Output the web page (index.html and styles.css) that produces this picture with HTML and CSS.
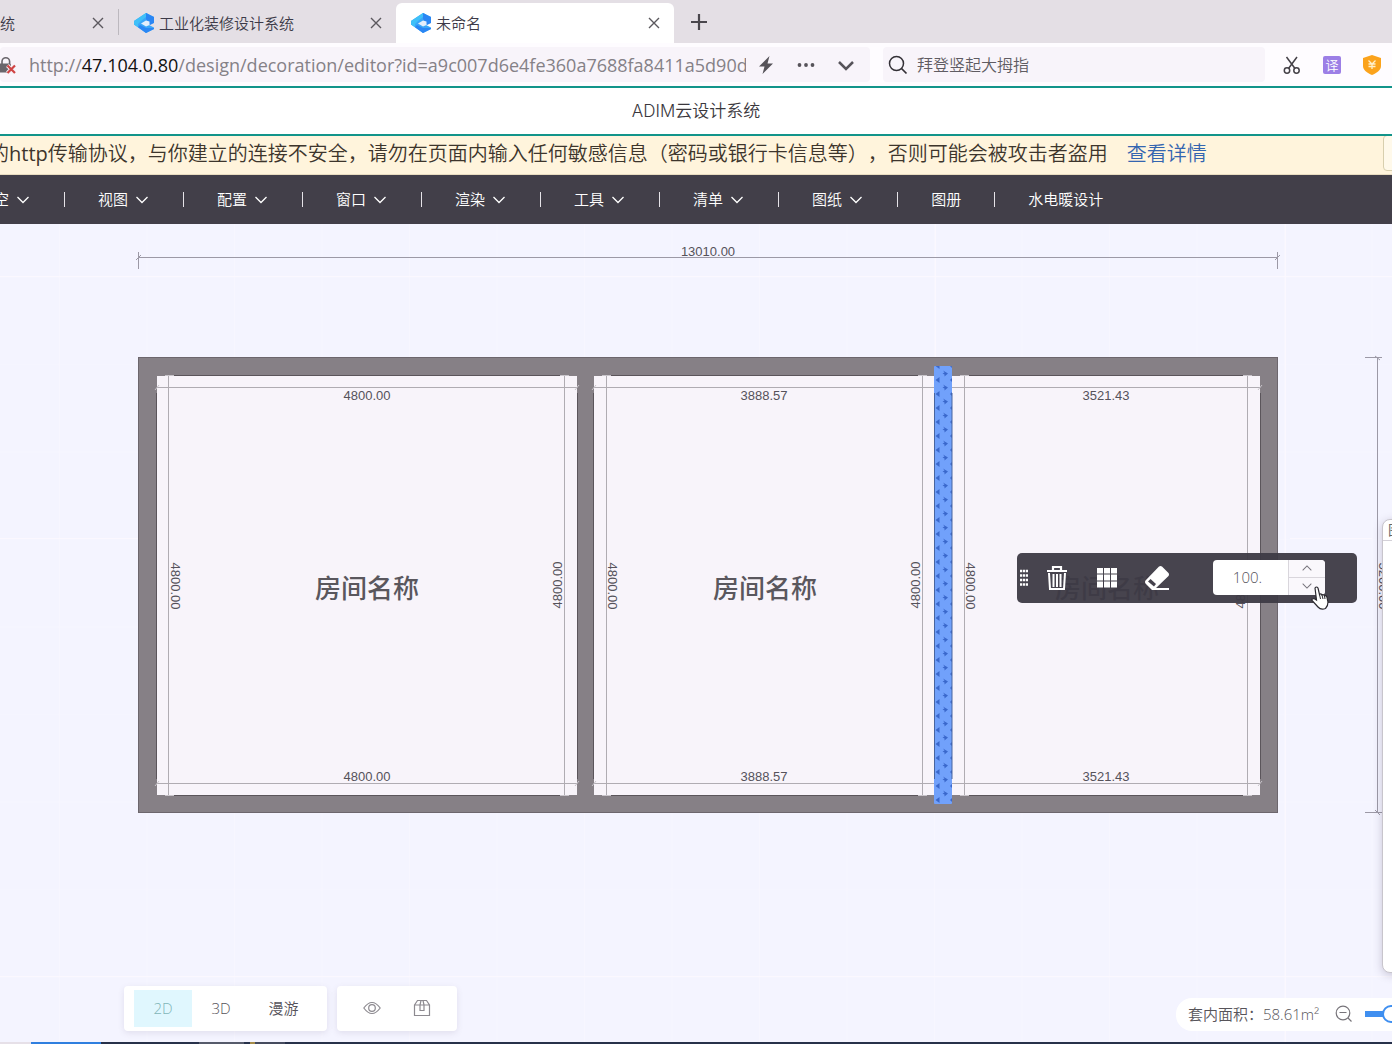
FILE: index.html
```html
<!DOCTYPE html>
<html lang="zh-CN">
<head>
<meta charset="utf-8">
<meta name="viewport" content="width=device-width, initial-scale=1">
<title>ADIM云设计系统</title>
<link rel="stylesheet" href="styles.css">
</head>
<body>
<svg class="defs" aria-hidden="true">
  <symbol id="logo" viewBox="0 0 20 20">
    <path d="M12 0 L20 4 V9.500 L15 12 L20 14.500 V16 L12 20 L0 11.500 V8 Z" fill="#3aa6f8"/>
    <path d="M12 0 L15 1.500 L7 8 L4 11 V14.300 L0 11.500 V8 Z" fill="#3fc0f8"/>
    <path d="M12 0 L20 4 V10 L16 12 L12 6 Z" fill="#2a86f4"/>
    <path d="M6 12 L12 15 L20 15 V16 L12 20 L4 14.300 Z" fill="#2a86f4"/>
    <path d="M7 10.500 L12 7.500 L15.500 8.500 V12 L12 13.500 Z" fill="#e4eefb"/>
  </symbol>
  <symbol id="close" viewBox="0 0 12 12"><path d="M1 1 L11 11 M11 1 L1 11" fill="none" stroke="#5b585e" stroke-width="1.400"/></symbol>
  <symbol id="chevron" viewBox="0 0 12 8"><path d="M.5 1 L6 6.500 L11.500 1" fill="none" stroke="currentColor" stroke-width="1.300"/></symbol>
</svg>

<div class="tabs">
  <div class="tab">
    <svg class="tab-logo"><use href="#logo"/></svg><span class="tab-name">工业化装修设计系统</span>
    <button class="tab-close" aria-label="关闭"><svg><use href="#close"/></svg></button>
  </div>
  <div class="tab tab-divided">
    <svg class="tab-logo"><use href="#logo"/></svg><span class="tab-name">工业化装修设计系统</span>
    <button class="tab-close" aria-label="关闭"><svg><use href="#close"/></svg></button>
  </div>
  <div class="tab tab-active">
    <svg class="tab-logo"><use href="#logo"/></svg><span class="tab-name">未命名</span>
    <button class="tab-close" aria-label="关闭"><svg><use href="#close"/></svg></button>
  </div>
  <button class="tab-new" aria-label="新建标签页"><svg viewBox="0 0 16 16"><path d="M8 0 V16 M0 8 H16" stroke="#4a474d" stroke-width="2.200"/></svg></button>
</div>

<div class="bar">
  <div class="address">
    <svg class="lock" viewBox="0 0 20 20">
      <path d="M6 9 V6.500 a3.800 3.800 0 0 1 7.600 0 V9" fill="none" stroke="#69656b" stroke-width="1.600"/>
      <rect x="1" y="8.500" width="14" height="9" rx="1.500" fill="#69656b"/>
      <path d="M11.500 10.500 L19 18 M19 10.500 L11.500 18" stroke="#f7f2f8" stroke-width="4"/>
      <path d="M11.500 10.500 L19 18 M19 10.500 L11.500 18" stroke="#cf4444" stroke-width="2.200"/>
    </svg>
    <div class="url" role="textbox" aria-label="地址" contenteditable="true" spellcheck="false">http://<span class="host">47.104.0.80</span>/design/decoration/editor?id=a9c007d6e4fe360a7688fa8411a5d90d</div>
    <button class="bar-btn" aria-label="极速模式"><svg viewBox="0 0 18 20"><path d="M12.500 1 L2 11.500 H7.500 L5.500 19 L16 8.500 H10.500 Z" fill="#565359"/></svg></button>
    <button class="bar-btn" aria-label="更多"><svg viewBox="0 0 18 20"><circle cx="2.500" cy="10" r="1.900" fill="#565359"/><circle cx="9" cy="10" r="1.900" fill="#565359"/><circle cx="15.500" cy="10" r="1.900" fill="#565359"/></svg></button>
    <button class="bar-btn" aria-label="展开"><svg viewBox="0 0 18 20"><path d="M2 7 L9 14 L16 7" fill="none" stroke="#565359" stroke-width="2.500"/></svg></button>
  </div>
  <label class="search">
    <svg viewBox="0 0 20 20"><circle cx="8.500" cy="8.500" r="7" fill="none" stroke="#333036" stroke-width="1.500"/><path d="M13.500 13.500 L18.500 18.500" stroke="#333036" stroke-width="1.700"/></svg>
    <input type="text" placeholder="拜登竖起大拇指" aria-label="搜索">
  </label>
  <div class="tools">
    <button class="tool" aria-label="截图"><svg viewBox="0 0 20 20"><path d="M4.500 2 L13 13.500 M15 2 L6.500 13.500" stroke="#444147" stroke-width="1.500"/><circle cx="5" cy="15.500" r="2.700" fill="none" stroke="#444147" stroke-width="1.500"/><circle cx="14.500" cy="15.500" r="2.700" fill="none" stroke="#444147" stroke-width="1.500"/></svg></button>
    <button class="tool translate">译</button>
    <button class="tool" aria-label="优惠"><svg viewBox="0 0 20 20"><path d="M10 0 L19 3 V11 C19 15 15 18 10 20 C5 18 1 15 1 11 V3 Z" fill="#fba31c"/><path d="M6.500 5.500 L10 9 L13.500 5.500 M10 9 V14 M6.500 9 H13.500 M6.500 11.500 H13.500" fill="none" stroke="#fff0cc" stroke-width="1.300"/></svg></button>
  </div>
</div>

<header class="title">ADIM云设计系统</header>

<div class="warning">
  <p>的<span class="latin">http</span>传输协议，与你建立的连接不安全，请勿在页面内输入任何敏感信息（密码或银行卡信息等），否则可能会被攻击者盗用</p>
  <a href="#detail">查看详情</a>
  <button class="warning-btn" aria-label="关闭提示"></button>
</div>

<nav class="menu">
  <button>空<svg><use href="#chevron"/></svg></button>
  <button>视图<svg><use href="#chevron"/></svg></button>
  <button>配置<svg><use href="#chevron"/></svg></button>
  <button>窗口<svg><use href="#chevron"/></svg></button>
  <button>渲染<svg><use href="#chevron"/></svg></button>
  <button>工具<svg><use href="#chevron"/></svg></button>
  <button>清单<svg><use href="#chevron"/></svg></button>
  <button>图纸<svg><use href="#chevron"/></svg></button>
  <button>图册</button>
  <button>水电暖设计</button>
</nav>

<main class="canvas">
  <svg class="drawing" role="img" aria-label="户型平面图">
    <defs>
      <pattern id="hatch" x="796" y="8" width="18" height="14" patternUnits="userSpaceOnUse">
        <rect width="18" height="14" fill="#71a1fb"/>
        <path d="M9 4.500 L14 7.500 L10.500 10.500 V8.500 L8.500 7.500 L10.500 6.500 Z M1.500 14 L5.500 11 V14 Z M1.500 0 H5.500 V3 Z M16 14 L18 12 V14 Z M16 0 H18 V2 Z" fill="#3a68cc"/>
      </pattern>
      <pattern id="grid" x="60" y="52" width="87.500" height="87.500" patternUnits="userSpaceOnUse">
        <path d="M87 0 V87.500 M0 1 H87.500" stroke="#fbf9ff" stroke-opacity=".35" fill="none"/>
      </pattern>
    </defs>
    <rect width="100%" height="100%" fill="url(#grid)"/>
    <path class="major" d="M1285.500 0 V818 M935.500 0 V134 M0 314.500 H138 M1290 314.500 H1372 M0 752.500 H1392 M0 52.500 H1392"/>
    <g transform="translate(138 134)">
      <rect class="wall" x=".5" y="-.5" width="1139" height="455"/>
      <rect class="floor" x="19" y="18" width="420" height="419"/>
      <rect class="floor" x="456" y="18" width="341" height="419"/>
      <rect class="floor" x="814" y="18" width="308" height="419"/>
      <path class="edge" d="M35 17.500 H423 M35 437.500 H423 M18.500 35 V421 M439.500 35 V421
        M472 17.500 H781 M472 437.500 H781 M455.500 35 V421
        M830 17.500 H1107 M830 437.500 H1107 M1122.500 35 V421"/>
      <path class="dim" d="M19 29.500 H439 M19 425.500 H439 M30.500 18 V437 M426.500 18 V437
        M456 29.500 H797 M456 425.500 H797 M468.500 18 V437 M784.500 18 V437
        M814 29.500 H1122 M814 425.500 H1122 M826.500 18 V437 M1109.500 18 V437"/>
      <path class="tick" d="M27 17.500 H36 M422 17.500 H431 M27 437.500 H36 M422 437.500 H431
        M464 17.500 H473 M780 17.500 H789 M464 437.500 H473 M780 437.500 H789
        M822 17.500 H831 M1105 17.500 H1114 M822 437.500 H831 M1105 437.500 H1114
        M17 32 L21 27 M437 32 L441 27 M454 32 L458 27 M1120 32 L1124 27
        M17 428 L21 423 M437 428 L441 423 M454 428 L458 423 M1120 428 L1124 423"/>
      <rect x="796" y="8" width="18" height="438" rx="1" fill="url(#hatch)"/>
      <path class="wall-edge" d="M796.500 35 V421 M814 35 V421"/>
      <path class="outer" d="M0 -100.500 H1140 M.5 -106 V-89 M-2 -98 L3 -103 M1139.500 -106 V-89 M1137 -98 L1142 -103
        M1239.500 0 V455 M1227 -.5 H1244 M1237 -2 L1242 2 M1227 454.500 H1244 M1237 452 L1242 457"/>
      <g class="size">
        <text x="570" y="-102">13010.00</text>
        <text x="229" y="42">4800.00</text><text x="229" y="423">4800.00</text>
        <text x="626" y="42">3888.57</text><text x="626" y="423">3888.57</text>
        <text x="968" y="42">3521.43</text><text x="968" y="423">3521.43</text>
        <text transform="translate(33 228) rotate(90)">4800.00</text>
        <text transform="translate(424 227) rotate(-90)">4800.00</text>
        <text transform="translate(470 228) rotate(90)">4800.00</text>
        <text transform="translate(782 227) rotate(-90)">4800.00</text>
        <text transform="translate(828 228) rotate(90)">4800.00</text>
        <text transform="translate(1107 227) rotate(-90)">4800.00</text>
        <text transform="translate(1241 228) rotate(90)">5200.00</text>
      </g>
      <g class="room">
        <text x="229" y="240">房间名称</text>
        <text x="627" y="240">房间名称</text>
        <text x="969" y="240">房间名称</text>
      </g>
    </g>
  </svg>

  <aside class="panel"><h2>图层</h2></aside>

  <div class="floating">
    <svg class="grip" viewBox="0 0 10 18"><path d="M1 2 H9 M1 6.500 H9 M1 11 H9 M1 15.500 H9" stroke="#fff" stroke-width="2.400" stroke-dasharray="2.200 .7"/></svg>
    <button aria-label="删除"><svg viewBox="0 0 24 26"><path d="M2 6 H22 M8 5 V2 H16 V5" fill="none" stroke="#fff" stroke-width="2.200"/><path d="M4 8 L5 24 H19 L20 8 M8.500 9 V22 M12 9 V22 M15.500 9 V22" fill="none" stroke="#fff" stroke-width="2"/></svg></button>
    <button aria-label="网格"><svg viewBox="0 0 24 26"><path d="M2 3 h6 v5.500 h-6z M9 3 h6 v5.500 h-6z M16 3 h6 v5.500 h-6z M2 9.500 h6 v6 h-6z M9 9.500 h6 v6 h-6z M16 9.500 h6 v6 h-6z M2 16.500 h6 v6 h-6z M9 16.500 h6 v6 h-6z M16 16.500 h6 v6 h-6z" fill="#fff"/></svg></button>
    <button aria-label="擦除"><svg viewBox="0 0 24 26"><path d="M14 1.500 Q15.500 .5 17 1.500 L23.500 8 Q24.500 9.500 23.500 11 L11 23 H24 V25 H7 L.5 18.500 Q-.5 17 .5 15.500 Z" fill="#fff"/><path d="M5.500 14 L11 19 L9 21.500 L3 16.500 Z" fill="#45424d"/></svg></button>
    <div class="stepper">
      <input type="text" value="100." aria-label="厚度">
      <div class="steps">
        <button aria-label="增加"><svg class="flip"><use href="#chevron"/></svg></button>
        <button aria-label="减少"><svg><use href="#chevron"/></svg></button>
      </div>
    </div>
    <svg class="pointer" viewBox="0 0 18 24"><path d="M4 2 Q5.500 0 7 2 L8.500 8.500 Q10 7 11 9 Q12.500 8 13.500 10 Q15.500 9 16 11.500 L17 16 Q17 20 14.500 22.500 Q10 24.500 7 21 L1 14.500 Q.5 12.500 3 12.500 L5.500 14 Z" fill="#fff" stroke="#2b2930" stroke-width="1.200"/><path d="M8.500 8.500 L9.500 13 M11 9 L12 13 M13.500 10 L14 13" stroke="#2b2930" fill="none"/></svg>
  </div>

  <div class="views">
    <div class="group modes">
      <button class="on">2D</button>
      <button>3D</button>
      <button>漫游</button>
    </div>
    <div class="group extras">
      <button aria-label="显示"><svg viewBox="0 0 18 18" fill="none" stroke="#8d8a90" stroke-width="1.200"><path d="M.8 9 Q9 -2 17.200 9 Q9 20 .8 9 Z"/><circle cx="9" cy="9" r="3.300"/></svg></button>
      <button aria-label="模型"><svg viewBox="0 0 18 18" fill="none" stroke="#8d8a90" stroke-width="1.200"><path d="M1.500 6 L4.500 1.500 H13.500 L16.500 6 V16.500 H1.500 Z M1.500 6 H16.500 M7 6 V11.500 H11 V6 M7 6 L8 1.500 M11 6 L10 1.500"/></svg></button>
    </div>
  </div>

  <div class="status">
    <span class="area">套内面积：58.61m²</span>
    <button aria-label="缩小"><svg viewBox="0 0 18 18" fill="none" stroke="#77747a" stroke-width="1.200"><circle cx="8" cy="8" r="6.800"/><path d="M4.500 7.500 H11.500 M13 13 L16.500 16.500"/></svg></button>
    <input type="range" min="0" max="100" value="19" aria-label="缩放">
  </div>
</main>
<footer class="taskbar"></footer>
</body>
</html>
```
FILE: styles.css
```css
* { box-sizing: border-box; }
body {
  margin: 0;
  height: 100vh;
  display: flex;
  flex-direction: column;
  overflow: hidden;
  background: #fff;
  font-family: "Open Sans", "Noto Sans CJK SC", sans-serif;
  font-weight: 350;
  text-spacing-trim: space-all;
  color: #3a373d;
}
button {
  border: 0;
  padding: 0;
  margin: 0;
  background: none;
  font: inherit;
  color: inherit;
  display: flex;
  align-items: center;
  justify-content: center;
  flex: none;
}
input { font: inherit; color: inherit; }
svg { display: block; flex: none; }
.defs { position: absolute; width: 0; height: 0; }

/* browser tabs */
.tabs {
  flex: none;
  display: flex;
  height: 43px;
  background: #e4dfe5;
  overflow: hidden;
}
.tab {
  flex: 0 0 278px;
  display: flex;
  align-items: center;
  padding: 2px 14px 0 15px;
  font-size: 15px;
}
.tab:first-child { margin-left: -160px; }
.tab-divided { padding-left: 16px; background: linear-gradient(#bcb8be, #bcb8be) 0 9px / 1px 26px no-repeat; }
.tab-active { background: #fff; margin-top: 3px; padding-top: 0; padding-bottom: 1px; border-radius: 6px 6px 0 0; }
.tab-logo { width: 20px; height: 20px; margin-right: 5px; }
.tab-name { flex: 1; color: #3c3a48; }
.tab-close svg { width: 12px; height: 12px; }
.tab-new { width: 50px; }
.tab-new svg { width: 16px; height: 16px; }

/* address bar */
.bar {
  flex: none;
  display: flex;
  align-items: center;
  gap: 13px;
  height: 43px;
  background: #fefcff;
}
.address, .search {
  display: flex;
  align-items: center;
  height: 35px;
  border-radius: 4px;
  background: #f8f4fa;
}
.address { flex: 1; min-width: 0; padding-right: 14px; }
.lock { width: 20px; height: 20px; margin: 0 13px 0 -4px; }
.url {
  flex: 1;
  min-width: 0;
  overflow: hidden;
  white-space: nowrap;
  font-size: 18px;
  line-height: 30px;
  font-weight: 400;
  color: #858187;
  outline: 0;
}
.host { color: #111; }
.bar-btn { width: 40px; }
.bar-btn:last-child { width: 20px; margin-left: 10px; }
.bar-btn svg { width: 18px; height: 20px; }
.search { flex: 0 0 382px; padding-left: 5px; gap: 9px; }
.search svg { width: 20px; height: 20px; }
.search input { flex: 1; min-width: 0; border: 0; padding: 0; background: none; font-size: 16px; outline: 0; }
.search input::placeholder { color: #5f5c62; opacity: 1; }
.tools { display: flex; gap: 20px; padding: 0 10px 0 4px; }
.tool, .tool svg { width: 20px; height: 20px; }
.translate { width: 18px; height: 18px; margin: 1px; border-radius: 2px; background: #9c7fe6; color: #fff; font-size: 13px; line-height: 18px; }

.title {
  flex: none;
  height: 50px;
  border: solid #12948a;
  border-width: 2px 0;
  background: #fff;
  text-align: center;
  font: 350 17px/46px Inter, "Noto Sans CJK SC", sans-serif;
}

.warning {
  flex: none;
  display: flex;
  align-items: center;
  height: 39px;
  overflow: hidden;
  background: #fff4dc;
  border-bottom: 1px solid #e8dcc0;
  font-size: 20px;
  line-height: 34px;
  white-space: nowrap;
  color: #3d352c;
}
.warning p { margin: 0 19px 2px -11px; }
.warning a { margin-bottom: 2px; color: #3465b0; text-decoration: none; }
.latin { font-weight: 400; }
.warning-btn { width: 60px; height: 36px; margin: -4px -51px 0 auto; border: 1px solid #d8cfae; border-radius: 4px; background: #fff9ea; }

.menu {
  flex: none;
  display: flex;
  height: 49px;
  padding-right: 20px;
  background: #423f49;
  color: #fff;
  font-size: 15px;
  overflow: hidden;
}
.menu button {
  padding: 0 33px 2px;
  background: linear-gradient(#e5e3e8, #e5e3e8) 0 50% / 1px 15px no-repeat;
}
.menu button:not(:first-child) { padding-left: 34px; }
.menu button:first-child { margin-left: -39px; }
.menu button:has(svg) { padding-right: 35px; }
.menu svg { width: 12px; height: 8px; margin: 2px 0 0 8px; }

/* drawing area */
.canvas { position: relative; flex: 1; min-height: 0; overflow: hidden; background: #f4f4ff; }
.drawing { position: absolute; inset: 0; width: 100%; height: 100%; }
.major { fill: none; stroke: #fcf9ff; stroke-width: 1; opacity: .8; }
.wall { fill: #868086; stroke: #6c666d; }
.floor { fill: #f8f4fa; }
.edge { stroke: #5b555b; fill: none; }
.dim { stroke: #b0acb2; fill: none; }
.tick { stroke: #c9c5cb; fill: none; }
.wall-edge { stroke: #48659f; fill: none; }
.outer { stroke: #9c99a6; fill: none; }
.size { font: 400 13px "Liberation Sans", sans-serif; fill: #55525a; text-anchor: middle; }
.room { font: 500 26px "Noto Sans CJK SC", sans-serif; fill: #5a575d; text-anchor: middle; }

.panel {
  position: absolute;
  top: 295px;
  right: -210px;
  width: 220px;
  height: 454px;
  border: 1px solid #c8c5cc;
  border-radius: 8px;
  background: #fff;
  box-shadow: 0 2px 8px rgba(70, 60, 90, .25);
}
.panel h2 { margin: 0; padding-left: 5px; font-size: 14px; line-height: 20px; font-weight: 400; color: #666; border-bottom: 1px solid #d4d1d8; }

.floating {
  position: absolute;
  top: 329px;
  right: 35px;
  display: flex;
  align-items: center;
  width: 340px;
  height: 50px;
  padding: 0 32px 0 2px;
  border-radius: 5px;
  background: rgba(61, 58, 69, .95);
}
.grip { width: 10px; height: 18px; margin-right: 16px; }
.floating > button { width: 24px; margin-right: 26px; }
.floating > button svg { width: 24px; height: 26px; }
.stepper {
  display: flex;
  width: 112px;
  height: 35px;
  margin: 0 0 2px auto;
  border-radius: 4px;
  background: #fff;
  overflow: hidden;
}
.stepper input { width: 75px; border: 0; padding: 0 6px 0 0; background: none; text-align: center; font-size: 15px; color: #55525a; }
.steps { flex: 1; display: flex; flex-direction: column; border-left: 1px solid #d9d6dc; background: #faf8fc; color: #77747c; }
.steps button { flex: 1; }
.steps button + button { border-top: 1px solid #d9d6dc; }
.steps svg { width: 12px; height: 8px; transform: scale(.8); }
.steps .flip { transform: scale(.8) rotate(180deg); }
.pointer { position: absolute; right: 28px; top: 33px; width: 18px; height: 24px; }

.views { position: absolute; left: 124px; bottom: 11px; display: flex; gap: 10px; }
.group { display: flex; align-items: center; height: 45px; border-radius: 4px; background: #fff; box-shadow: 0 2px 6px rgba(90, 70, 110, .12); }
.group button { height: 37px; padding-bottom: 2px; }
.modes { padding: 0 10px; font-size: 15px; color: #55525a; }
.modes button { width: 58px; }
.modes button:last-child { width: 67px; }
.modes .on { background: #e0f7fe; color: #7fb5b8; }
.extras { width: 120px; justify-content: center; gap: 32px; }
.extras svg { width: 18px; height: 18px; }

.status {
  position: absolute;
  left: calc(100% - 216px);
  bottom: 11px;
  display: flex;
  align-items: center;
  height: 33px;
  padding: 0 12px 2px;
  border-radius: 16px;
  background: #fff;
  white-space: nowrap;
  font-size: 15px;
  color: #57545a;
}
.area { width: 135px; }
.status button { width: 18px; height: 18px; margin: 0 12px; }
.status button svg { width: 18px; height: 18px; }
.status input {
  appearance: none;
  width: 110px;
  height: 20px;
  margin: 0;
  background: linear-gradient(90deg, #3f8ff0 25%, #dcdfe6 25%) 0 50% / 100% 6px no-repeat;
  border-radius: 3px;
}
.status input::-webkit-slider-thumb { appearance: none; width: 18px; height: 18px; border: 2px solid #3f8ff0; border-radius: 50%; background: #fff; }

.taskbar {
  flex: none;
  height: 2px;
  background: linear-gradient(90deg, #e6e0e8 31px, #2f7fdf 31px 101px, #27314a 101px 199px, #565b6b 199px 244px, #27314a 244px 250px, #a58c4a 250px 255px, #454b5e 255px 285px, #27314a 285px);
}
```
